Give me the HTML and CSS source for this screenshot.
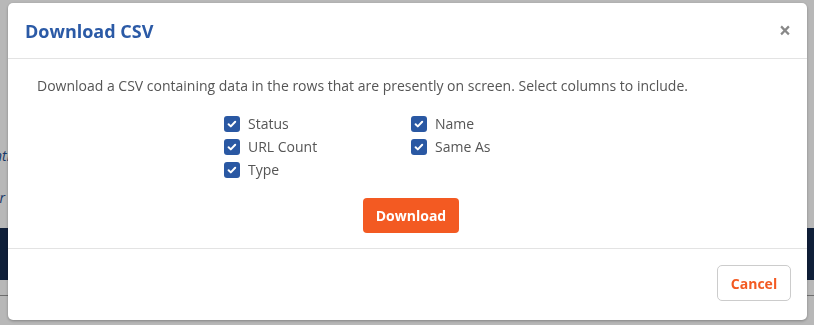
FILE: index.html
```html
<!DOCTYPE html>
<html lang="en">
<head>
    <meta charset="UTF-8">
    <title>Download CSV</title>
    <link rel="stylesheet" href="styles.css">
</head>
<body>
    <div class="page">
        <p class="page-link first">nti</p>
        <p class="page-link">rr</p>
        <div class="page-bar"></div>
        <div class="page-rule"></div>
    </div>

    <div class="backdrop">
        <div class="modal">
            <div class="modal-header">
                <h1>Download CSV</h1>
                <span class="close">&times;</span>
            </div>
            <div class="modal-body">
                <p>Download a CSV containing data in the rows that are presently on screen. Select columns to include.</p>
                <div class="columns">
                    <label class="check"><span class="box"><svg viewBox="0 0 16 16"><path d="M4.6 8.3l2.2 2.1 4.4-4.6"/></svg></span>Status</label>
                    <label class="check"><span class="box"><svg viewBox="0 0 16 16"><path d="M4.6 8.3l2.2 2.1 4.4-4.6"/></svg></span>Name</label>
                    <label class="check"><span class="box"><svg viewBox="0 0 16 16"><path d="M4.6 8.3l2.2 2.1 4.4-4.6"/></svg></span>URL Count</label>
                    <label class="check"><span class="box"><svg viewBox="0 0 16 16"><path d="M4.6 8.3l2.2 2.1 4.4-4.6"/></svg></span>Same As</label>
                    <label class="check"><span class="box"><svg viewBox="0 0 16 16"><path d="M4.6 8.3l2.2 2.1 4.4-4.6"/></svg></span>Type</label>
                </div>
                <div class="actions">
                    <button class="btn-primary">Download</button>
                </div>
            </div>
            <div class="modal-footer">
                <button class="btn-cancel">Cancel</button>
            </div>
        </div>
    </div>
</body>
</html>
```

FILE: styles.css
```css
body {
    margin: 0;
    font-family: 'Open Sans', sans-serif;
    background-color: #ffffff;
    overflow: hidden;
}

.page {
    height: 325px;
    padding-top: 147px;
    box-sizing: border-box;
}

.page-link {
    margin: 0 0 24px -6px;
    font-size: 14px;
    line-height: 18px;
    font-style: italic;
    color: #1f4d8f;
}

.page-bar {
    height: 52px;
    margin-top: -3px;
    background-color: #162b50;
}

.page-rule {
    height: 1px;
    margin-top: 15px;
    background-color: #999;
}

.backdrop {
    position: fixed;
    inset: 0;
    background-color: rgba(0, 0, 0, 0.28);
    display: flex;
    align-items: flex-start;
    padding: 3px 0 0 8px;
}

.modal {
    width: 799px;
    height: 317px;
    background-color: #ffffff;
    border-radius: 5px;
    box-shadow: 0 1px 3px rgba(0, 0, 0, 0.3);
    display: flex;
    flex-direction: column;
}

.modal-header {
    height: 55px;
    display: flex;
    align-items: center;
    justify-content: space-between;
    padding: 0 17px;
    border-bottom: 1px solid #e3e3e3;
}

.modal-header h1 {
    margin: 0;
    font-size: 18px;
    font-weight: 700;
    color: #2b5aa6;
}

.close {
    font-size: 21px;
    font-weight: 700;
    color: #888;
    margin-right: -1px;
    margin-top: -1px;
}

.modal-body {
    padding: 17px 29px 15px;
    border-bottom: 1px solid #e3e3e3;
}

.modal-body p {
    margin: 0;
    font-size: 14px;
    line-height: 20px;
    color: #555;
}

.columns {
    display: grid;
    grid-template-columns: 187px 187px;
    margin: 16px 0 0 187px;
}

.check {
    display: flex;
    align-items: center;
    gap: 8px;
    height: 23px;
    font-size: 14px;
    color: #555;
}

.box {
    width: 16px;
    height: 16px;
    border-radius: 3px;
    background-color: #2a58a3;
    display: flex;
}

.box svg {
    width: 16px;
    height: 16px;
    fill: none;
    stroke: #fff;
    stroke-width: 2;
    stroke-linecap: round;
    stroke-linejoin: round;
}

.actions {
    margin: 17px 0 0 326px;
}

.btn-primary {
    width: 96px;
    height: 35px;
    border: none;
    border-radius: 4px;
    background-color: #f35a22;
    color: #fff;
    font-family: 'Open Sans', sans-serif;
    font-size: 14px;
    font-weight: 700;
}

.modal-footer {
    flex: 1;
    display: flex;
    justify-content: flex-end;
    align-items: flex-start;
    padding: 16px 16px 0;
}

.btn-cancel {
    width: 74px;
    height: 36px;
    border: 1px solid #ccc;
    border-radius: 5px;
    background-color: #fff;
    color: #f35a22;
    font-family: 'Open Sans', sans-serif;
    font-size: 14px;
    font-weight: 700;
}
```
